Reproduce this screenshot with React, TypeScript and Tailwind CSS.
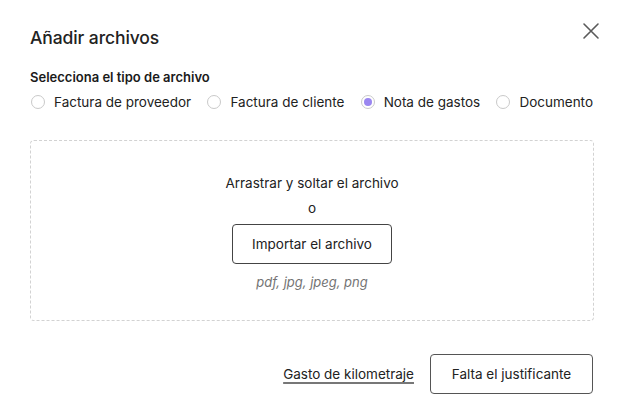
import React from "react";

const options = ["Factura de proveedor", "Factura de cliente", "Nota de gastos", "Documento"];

export default function App() {
  return (
    <div className="w-[621px] h-[418px] bg-white text-[#1f1f1f]" style={{ fontFamily: "Inter, 'Liberation Sans', sans-serif" }}>
      <div className="flex items-start justify-between pl-[30px] pr-[21px] pt-[27px]">
        <h1 className="text-[17.5px] font-medium leading-[22px] text-[#222] tracking-[-0.1px]">Añadir archivos</h1>
        <svg width="18" height="18" viewBox="0 0 18 18" className="-mt-[5px]">
          <path d="M2 2L16 16M16 2L2 16" stroke="#5a5a5a" strokeWidth="1.6" strokeLinecap="round" />
        </svg>
      </div>
      <div className="pl-[30px] pr-[28px] mt-[19px]">
        <div className="text-[13px] font-semibold leading-[18px] text-[#1a1a1a]">Selecciona el tipo de archivo</div>
        <div className="flex items-center justify-between mt-[7px] pl-[1px]">
          {options.map((o, i) => (
            <label key={o} className="flex items-center gap-[9px]">
              <span className="w-[14px] h-[14px] rounded-full border border-[#c9c9c9] flex items-center justify-center bg-white">
                {i === 2 && <span className="w-[8px] h-[8px] rounded-full bg-[#9a86f0]" />}
              </span>
              <span className="text-[13.5px] leading-[18px] text-[#222]">{o}</span>
            </label>
          ))}
        </div>
        <div className="mt-[29px] h-[181px] w-[564px] rounded-[4px] border border-dashed border-[#d2d2d2] flex flex-col items-center pt-[33px]">
          <div className="text-[13.5px] leading-[18px] text-[#222]">Arrastrar y soltar el archivo</div>
          <div className="text-[13.5px] leading-[18px] text-[#222] mt-[7px]">o</div>
          <button className="mt-[7px] w-[160px] h-[40px] rounded-[4px] border border-[#444] text-[13.5px] text-[#222] bg-white">Importar el archivo</button>
          <div className="mt-[9px] text-[13px] italic text-[#747474] leading-[18px]">pdf, jpg, jpeg, png</div>
        </div>
        <div className="flex items-center justify-end gap-[16px] mt-[33px] pr-[0px]">
          <span className="text-[13.5px] text-[#222] underline decoration-[#777] underline-offset-[3px] decoration-[1.5px]">Gasto de kilometraje</span>
          <button className="w-[163px] h-[40px] rounded-[4px] border border-[#555] text-[13.5px] text-[#222] bg-white">Falta el justificante</button>
        </div>
      </div>
    </div>
  );
}
